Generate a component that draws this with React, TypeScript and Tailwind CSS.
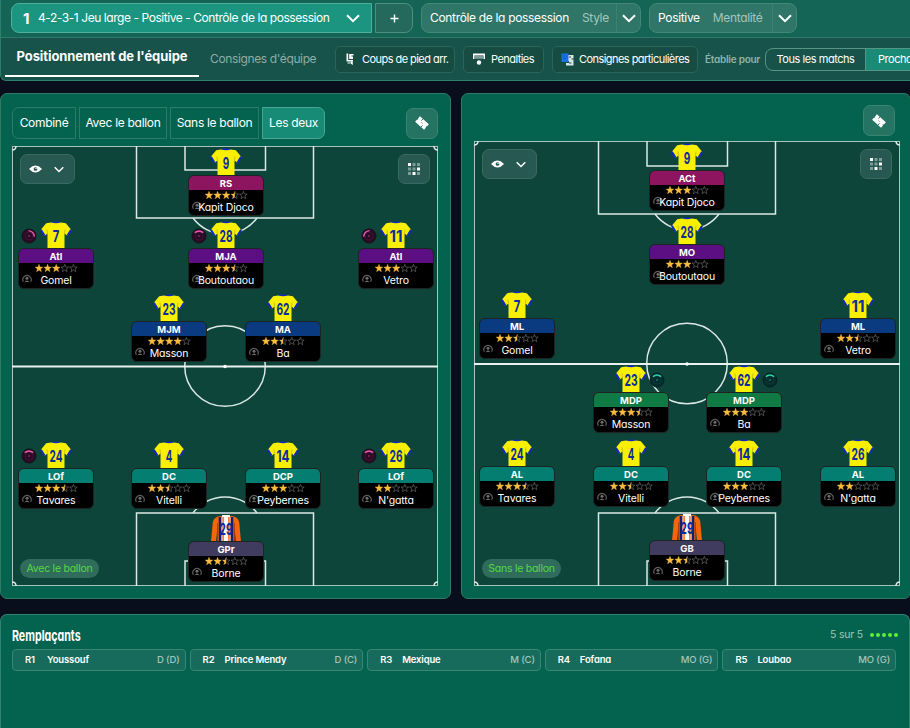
import clsx from "clsx";

type Swirl = "left" | "right" | "top" | "teal";

interface Player {
  x: number;
  y: number;
  num: number;
  role: string;
  color: string;
  stars: number;
  name: string;
  disc?: Swirl;
  keeper?: boolean;
}

const PINK = "bg-[#8d1560] border-[#a53a7e]";
const PURPLE = "bg-[#5c0f83] border-[#7c3a9e]";
const BLUE = "bg-[#0a3a80] border-[#3058a0]";
const TEAL = "bg-[#047e70] border-[#31998c]";
const GREEN = "bg-[#107a45] border-[#3c9869]";
const SLATE = "bg-[#403c5f] border-[#5d5a79]";

// x / y : centre and top edge of each card, relative to the pitch
const withBall: Player[] = [
  { x: 214, y: 29, num: 9, role: "RS", color: PINK, stars: 3.5, name: "Kapit Djoco" },
  { x: 44, y: 102, num: 7, role: "Atl", color: PURPLE, stars: 3, name: "Gomel", disc: "right" },
  { x: 214, y: 102, num: 28, role: "MJA", color: PURPLE, stars: 3.5, name: "Boutoutaou", disc: "top" },
  { x: 384, y: 102, num: 11, role: "Atl", color: PURPLE, stars: 3, name: "Vetro", disc: "left" },
  { x: 157, y: 175, num: 23, role: "MJM", color: BLUE, stars: 4, name: "Masson" },
  { x: 271, y: 175, num: 62, role: "MA", color: BLUE, stars: 2.5, name: "Ba" },
  { x: 44, y: 322, num: 24, role: "LOf", color: TEAL, stars: 3.5, name: "Tavares", disc: "top" },
  { x: 157, y: 322, num: 4, role: "DC", color: TEAL, stars: 2.5, name: "Vitelli" },
  { x: 271, y: 322, num: 14, role: "DCP", color: TEAL, stars: 3, name: "Peybernes" },
  { x: 384, y: 322, num: 26, role: "LOf", color: TEAL, stars: 2, name: "N'gatta", disc: "top" },
  { x: 214, y: 395, num: 29, role: "GPr", color: SLATE, stars: 2.5, name: "Borne", keeper: true },
];

const withoutBall: Player[] = [
  { x: 213, y: 29, num: 9, role: "ACt", color: PINK, stars: 3, name: "Kapit Djoco" },
  { x: 213, y: 103, num: 28, role: "MO", color: PURPLE, stars: 3, name: "Boutoutaou" },
  { x: 43, y: 177, num: 7, role: "ML", color: BLUE, stars: 2.5, name: "Gomel" },
  { x: 384, y: 177, num: 11, role: "ML", color: BLUE, stars: 2.5, name: "Vetro" },
  { x: 157, y: 251, num: 23, role: "MDP", color: GREEN, stars: 3.5, name: "Masson", disc: "teal" },
  { x: 270, y: 251, num: 62, role: "MDP", color: GREEN, stars: 3, name: "Ba", disc: "teal" },
  { x: 43, y: 325, num: 24, role: "AL", color: TEAL, stars: 3.5, name: "Tavares" },
  { x: 157, y: 325, num: 4, role: "DC", color: TEAL, stars: 2.5, name: "Vitelli" },
  { x: 270, y: 325, num: 14, role: "DC", color: TEAL, stars: 3, name: "Peybernes" },
  { x: 384, y: 325, num: 26, role: "AL", color: TEAL, stars: 2, name: "N'gatta" },
  { x: 213, y: 399, num: 29, role: "GB", color: SLATE, stars: 2.5, name: "Borne", keeper: true },
];

const subs = [
  { id: "R1", name: "Youssouf", pos: "D (D)" },
  { id: "R2", name: "Prince Mendy", pos: "D (C)" },
  { id: "R3", name: "Mexique", pos: "M (C)" },
  { id: "R4", name: "Fofana", pos: "MO (G)" },
  { id: "R5", name: "Loubao", pos: "MO (G)" },
];

const Chevron = ({ className }: { className?: string }) => (
  <svg viewBox="0 0 14 9" className={clsx("shrink-0", className)} fill="none" stroke="currentColor" strokeWidth="2">
    <path d="M1 1.2 L7 7.2 L13 1.2" />
  </svg>
);

const Shirt = ({ num, keeper }: { num: number; keeper?: boolean }) => (
  <svg viewBox="0 0 32 28" className="block h-7 w-8 shrink-0">
    {keeper ? (
      <>
        <path d="M10 2 Q4 3 2.8 8 L1 28 H6 L7.5 13 V28 H24.5 V13 L26 28 H31 L29.2 8 Q28 3 22 2 Z" fill="#f4650c" />
        <path d="M7.5 9 V28 M24.5 9 V28" stroke="#a53608" strokeWidth="0.8" />
        <path d="M10 3 V28 M22 3 V28" stroke="#14206e" strokeWidth="2.6" />
        <path d="M12 3 V28 M20 3 V28" stroke="#d8dcf0" strokeWidth="1" />
        <rect x="13.8" y="2" width="4.4" height="26" fill="#ffffff" />
        <path d="M12 1 H20 V3 H12Z" fill="#ffffff" />
      </>
    ) : (
      <>
        <path d="M11.5 1 Q16 0 20.5 1 L20.5 3 H11.5 Z" fill="#1128c4" />
        <path
          d="M11 1.6 Q16 2.8 21 1.6 L25.8 2.2 L31.2 8.7 L27.6 15 L24.5 12.6 V28 H7.5 V12.6 L4.4 15 L0.8 8.7 L6.2 2.2 Z"
          fill="#f8f000"
        />
        <path d="M0.9 8.7 L4.6 14.8 M31.1 8.7 L27.4 14.8" stroke="#1128c4" strokeWidth="2" />
        <path d="M7.5 12.5 L7 8.5 M24.5 12.5 L25 8.5" stroke="#b9b200" strokeWidth="0.7" />
      </>
    )}
    <text
      x="16"
      y="20.5"
      textAnchor="middle"
      textLength={num > 9 ? 13 : 6.5}
      lengthAdjust="spacingAndGlyphs"
      fontFamily="Inter, sans-serif"
      fontWeight="700"
      fontSize="16"
      fill="#0d2b9c"
    >
      {num}
    </text>
  </svg>
);

const STAR = "M4 0.3 L5 3 L7.8 3.1 L5.6 4.9 L6.4 7.7 L4 6.1 L1.6 7.7 L2.4 4.9 L0.2 3.1 L3 3 Z";

const Stars = ({ value }: { value: number }) => (
  <svg viewBox="0 0 43 8" className="h-2 w-[43px]">
    {[0, 1, 2, 3, 4].map((i) => (
      <g key={i} transform={`translate(${i * 8.6} 0)`}>
        {value >= i + 1 ? (
          <path d={STAR} fill="#fbbd3e" stroke="#fbbd3e" strokeWidth="0.4" />
        ) : (
          <>
            <path d={STAR} fill="none" stroke="#747474" strokeWidth="0.6" />
            {value > i && <path d="M4 0.3 V6.1 L1.6 7.7 L2.4 4.9 L0.2 3.1 L3 3 Z" fill="#fbbd3e" />}
          </>
        )}
      </g>
    ))}
  </svg>
);

const Disc = ({ kind }: { kind: Swirl }) => {
  const teal = kind === "teal";
  const turn = kind === "left" ? -45 : kind === "right" ? 45 : 0;
  return (
    <svg viewBox="0 0 16 16" className="h-4 w-4">
      <circle cx="8" cy="8" r="7" fill={teal ? "#062d2d" : "#2b0c25"} stroke={teal ? "#052020" : "#16101a"} />
      <circle cx="8" cy="8" r="4" fill="none" stroke={teal ? "#0a3836" : "#3d1233"} strokeWidth="1" />
      <circle cx="8" cy="8" r="0.7" fill={teal ? "#24b99b" : "#d6459b"} />
      <path
        d="M3.8 4.6 Q8 1.2 12.2 4.6"
        transform={`rotate(${turn} 8 8)`}
        fill="none"
        stroke={teal ? "#22d3ac" : "#ee59b2"}
        strokeWidth="1.5"
      />
    </svg>
  );
};

const PlayerCard = ({ p }: { p: Player }) => (
  <div className="absolute w-[76px] -translate-x-1/2" style={{ left: p.x, top: p.y - 27 }}>
    <div className="flex h-[27px] justify-center overflow-hidden pr-px">
      <Shirt num={p.num} keeper={p.keeper} />
    </div>
    {p.disc && (
      <div className={clsx("absolute top-[7px]", p.disc === "teal" ? "left-[56px]" : "left-[3px]")}>
        <Disc kind={p.disc} />
      </div>
    )}
    <div className="relative h-[41px] overflow-hidden rounded-[6px] border border-[#1d2423] bg-black text-white">
      <div
        className={clsx(
          "-mx-px -mt-px flex h-[15px] items-center justify-center rounded-t-[6px] border border-b-0 pt-px text-[9.5px] font-bold leading-none",
          p.color
        )}
      >
        {p.role}
      </div>
      <div className="flex h-[10px] items-center justify-center">
        <Stars value={p.stars} />
      </div>
      <svg viewBox="0 0 10 10" className="absolute left-[3px] top-[25px] h-[10px] w-[10px]" fill="#6e6e6e">
        <path d="M1.4 7.8 A4.2 4.2 0 1 1 8.6 7.8" fill="none" stroke="#5c5c5c" strokeWidth="1.2" />
        <circle cx="5" cy="4.2" r="1.5" />
        <path d="M2.4 8.6 Q5 4.6 7.6 8.6 L6.2 8 H3.8 Z" />
      </svg>
      <p className="relative whitespace-nowrap pt-px text-center text-[10.5px] leading-[13px] tracking-[-0.15px]">{p.name}</p>
    </div>
  </div>
);

const PitchLines = ({ h, top, bottom }: { h: number; top: number; bottom: number }) => {
  const mid = h / 2 + 0.5;
  return (
    <svg width="426" height={h} viewBox={`0 0 426 ${h}`} className="block" fill="none" stroke="#dbe8e5" strokeWidth="1.5">
      <rect x="0.5" y="0.5" width="425" height={h - 1} strokeWidth="1" stroke="#a9c3bd" />
      <path d={`M124.500 0 V${top} H301.500 V0`} />
      <path d={`M173 0 V${top - 48} H253.500 V0`} />
      <path d={`M124.500 ${h} V${bottom} H301.500 V${h}`} />
      <path d={`M173 ${h} V${bottom + 48} H253.500 V${h}`} />
      <path d={`M181 ${top} A40 40 0 0 0 245 ${top}`} />
      <path d={`M181 ${bottom} A40 40 0 0 1 245 ${bottom}`} />
      <circle cx="213" cy={mid - 0.5} r="40.3" />
      <path d={`M0 ${mid} H426`} strokeWidth="2" stroke="#e9f2f0" />
      <circle cx="213" cy={mid} r="1.8" fill="#fff" stroke="none" />
      <path d={`M0 4 Q4 4 4 0 M422 0 Q422 4 426 4 M0 ${h - 4} Q4 ${h - 4} 4 ${h} M422 ${h} Q422 ${h - 4} 426 ${h - 4}`} />
    </svg>
  );
};

interface PitchProps {
  h: number;
  top: number;
  bottom: number;
  players: Player[];
  label: string;
}

const Pitch = ({ h, top, bottom, players, label }: PitchProps) => (
  <div className="relative w-[426px] bg-[#0d453b]">
    <PitchLines h={h} top={top} bottom={bottom} />
    <button className="absolute left-[8px] top-[8px] flex h-[30px] w-[55px] items-center justify-center gap-3 rounded-[7px] border border-[#3c6862] bg-[#275852] pr-[3px] text-white">
      <svg viewBox="0 0 14 8" className="h-2 w-[13px]">
        <path d="M0 4 Q7 -3.5 14 4 Q7 11.5 0 4 Z" fill="#fff" />
        <circle cx="7" cy="4" r="2" fill="#275852" />
        <circle cx="7.6" cy="3.4" r="0.7" fill="#fff" />
      </svg>
      <Chevron className="h-[7px] w-[10px]" />
    </button>
    <button className="absolute right-[8px] top-[8px] flex h-[30px] w-8 items-center justify-center rounded-[7px] border border-[#3c6862] bg-[#275852]">
      <svg viewBox="0 0 12 12" className="h-3 w-3">
        {[0, 1, 2].map((r) =>
          [0, 1, 2].map((c) => (
            <rect
              key={`${r}${c}`}
              x={c * 4.5}
              y={r * 4.5}
              width="3"
              height="3"
              fill={(r === 0 && c === 0) || (r === 1 && c === 2) || (r === 2 && c === 1) ? "#fff" : "#7d9c98"}
            />
          ))
        )}
      </svg>
    </button>
    {players.map((p) => (
      <PlayerCard key={p.num} p={p} />
    ))}
    <span className="absolute bottom-[8px] left-[8px] flex h-[19px] w-[79px] items-center justify-center whitespace-nowrap rounded-full bg-[#2f6c5b] text-[10.5px] tracking-[-0.25px] text-[#55d847]">
      {label}
    </span>
  </div>
);

const TicketButton = () => (
  <button className="flex h-[31px] w-8 items-center justify-center rounded-[7px] border border-[#3a8371] bg-[#257363]">
    <svg viewBox="0 0 14 14" className="h-[14px] w-[14px]">
      <g transform="rotate(42 7 7)">
        <path d="M1 3.4 H13 V6 L12.2 7 L13 8 V10.6 H1 V8 L1.8 7 L1 6 Z" fill="#fff" />
        <path d="M5 3.4 V5.6 M9 8.4 V10.6 M6.4 7 H7.6" stroke="#257363" strokeWidth="0.9" />
      </g>
    </svg>
  </button>
);

const SetPieceIcon = () => (
  <svg viewBox="0 0 8 12" className="h-3 w-2 shrink-0" fill="#fff">
    <path d="M0.5 0.5 H2.2 V7 H7 V8.5 H0.5 Z M3.2 1 H7.5 V2.5 H5.5 V3.5 H7 V6 H3.2 Z" />
    <path d="M1.5 9.5 H4 V10.5 H1.5 Z M4.5 8.5 H6.8 V12 L4.5 10.5 Z" />
  </svg>
);

const PenaltyIcon = () => (
  <svg viewBox="0 0 12 12" className="h-3 w-3 shrink-0">
    <path d="M0 0.5 H12 V6 H10.5 V2.5 H1.5 V6 H0 Z" fill="#fff" />
    <path d="M2 2.5 H10 V5.8 H2 Z" fill="#7d9e98" />
    <circle cx="6" cy="9.5" r="2.2" fill="#fff" />
  </svg>
);

const InstructionsIcon = () => (
  <svg viewBox="0 0 13 13" className="h-[13px] w-[13px] shrink-0">
    <path d="M7 2 H12.5 V5.5 H10.5 V6.5 H12.5 V12.5 H5 V10 H8 V8 H7 Z" fill="#d9e6e3" />
    <path d="M8 4 H10 M8 10 H10.5" stroke="#16554a" />
    <path d="M0.5 0.5 H7.5 V9 H0.5 Z" fill="#1673ea" />
    <path d="M2 3 H3.5 M5 3 H6 M2.5 5.5 H5" stroke="#0a50b5" />
  </svg>
);

const Dropdown = ({ value, label, className }: { value: string; label: string; className: string }) => (
  <div
    className={clsx(
      "flex h-[30px] items-center whitespace-nowrap rounded-[8px] border border-[#438777] bg-[#2f7668] pl-2 text-[12px] tracking-[-0.33px]",
      className
    )}
  >
    <span className="text-white">{value}</span>
    <span className="ml-[13px] text-[#a5c5bd]">{label}</span>
    <span className="ml-auto flex h-full w-6 items-center justify-center border-l border-[#3b8070] text-white">
      <Chevron className="h-[9px] w-[14px]" />
    </span>
  </div>
);

const toolButton =
  "flex h-[27px] shrink-0 items-center rounded-[5px] border border-[#2a655a] bg-[#164c42] text-[11px] tracking-[-0.55px]";

const Header = () => (
  <header className="h-[81px] overflow-hidden rounded-bl-[6px] border-b border-l border-[#2c7d69] bg-[#17534a]">
    <div className="flex h-[38px] items-start border-b border-[#2f7a69] bg-[#156556] pl-[10px] pt-[3px]">
      <button className="flex h-[30px] w-[361px] items-center rounded-l-[8px] border border-[#4fae9c] bg-[#1b9580] pl-[11px] text-white">
        <span className="w-[15px] shrink-0 text-left text-[15px] font-bold leading-none">1</span>
        <span className="whitespace-nowrap text-[12px] tracking-[-0.44px]">
          4-2-3-1 Jeu large - Positive - Contrôle de la possession
        </span>
        <Chevron className="ml-auto mr-[11px] h-[9px] w-[14px]" />
      </button>
      <button className="ml-[3px] flex h-[30px] w-[38px] items-center justify-center rounded-r-[8px] border border-[#4f8f81] bg-[#24695c]">
        <svg viewBox="0 0 10 10" className="h-[9px] w-[9px]">
          <path d="M5 0.5 V9.5 M0.5 5 H9.5" stroke="#fff" strokeWidth="1.6" />
        </svg>
      </button>
      <Dropdown value="Contrôle de la possession" label="Style" className="ml-2 w-[220px]" />
      <Dropdown value="Positive" label="Mentalité" className="ml-2 w-[148px]" />
    </div>
    <nav className="flex h-[42px] items-center whitespace-nowrap pl-1 text-white">
      <div className="flex h-[39px] w-[194px] shrink-0 items-center justify-center self-start border-b-2 border-white text-[13px] font-bold tracking-[-0.08px]">
        Positionnement de l'équipe
      </div>
      <div className="ml-[11px] w-[125px] shrink-0 text-[12px] tracking-[-0.37px] text-[#8fada7]">Consignes d'équipe</div>
      <button className={clsx(toolButton, "w-[120px] gap-2 pl-[10px]")}>
        <SetPieceIcon />
        Coups de pied arr.
      </button>
      <button className={clsx(toolButton, "ml-2 w-[81px] gap-[6px] pl-[9px]")}>
        <PenaltyIcon />
        Penalties
      </button>
      <button className={clsx(toolButton, "ml-2 w-[146px] gap-[5px] pl-[8px]")}>
        <InstructionsIcon />
        Consignes particulières
      </button>
      <span className="ml-[7px] w-[60px] shrink-0 text-[10px] font-semibold tracking-[-0.25px] text-[#8fb3ab]">Établie pour</span>
      <div className="flex h-[23px] w-[190px] shrink-0 overflow-hidden rounded-[8px] border border-[#559585] text-[11px] tracking-[-0.45px]">
        <span className="flex w-[100px] items-center justify-center border-r border-[#559585]">Tous les matchs</span>
        <span className="flex flex-1 items-center bg-[#1a8b77] pl-3">Prochain match</span>
      </div>
    </nav>
  </header>
);

const viewTabs = [
  { label: "Combiné", cls: "w-[64px] rounded-l-[7px] border-[#2c7a67]" },
  { label: "Avec le ballon", cls: "w-[88px] border-[#2c7a67]" },
  { label: "Sans le ballon", cls: "w-[89px] border-[#2c7a67]" },
  { label: "Les deux", cls: "w-[63px] rounded-r-[7px] border-[#48a693] bg-[#178b75]" },
];

const App = () => {
  return (
    <div className="h-[728px] w-[910px] overflow-hidden bg-[#080e1b] font-['Inter',sans-serif] [font-feature-settings:'cv11']">
      <Header />
      <main className="mt-[12px] flex gap-[10px]">
        <section className="h-[506px] w-[451px] shrink-0 rounded-[7px] border border-[#2f7a63] bg-[#04634f] pl-[11px] pt-[13px]">
          <div className="mb-[7px] flex h-8 w-[426px] items-center justify-between">
            <div className="flex gap-[3px]">
              {viewTabs.map((t) => (
                <button
                  key={t.label}
                  className={clsx(
                    "flex h-8 items-center justify-center whitespace-nowrap border text-[12px] tracking-[-0.3px] text-white",
                    t.cls
                  )}
                >
                  {t.label}
                </button>
              ))}
            </div>
            <TicketButton />
          </div>
          <Pitch h={440} top={72} bottom={367} players={withBall} label="Avec le ballon" />
        </section>
        <section className="h-[506px] w-[450px] shrink-0 rounded-[7px] border border-[#2f7a63] bg-[#04634f] pl-[12px] pt-[11px]">
          <div className="mb-[5px] flex h-[31px] w-[421px] justify-end">
            <TicketButton />
          </div>
          <Pitch h={445} top={73} bottom={372} players={withoutBall} label="Sans le ballon" />
        </section>
      </main>
      <section className="mt-[15px] h-[120px] rounded-t-[7px] border border-b-0 border-[#2f8471] bg-[#04634f] pl-[11px] pr-[13px] pt-[11px]">
        <div className="flex h-[18px] items-center justify-between">
          <h2 className="origin-left scale-x-[0.71] text-[15px] font-bold leading-none text-white">Remplaçants</h2>
          <div className="-mr-[2px] flex items-center gap-[2px] text-[10.5px] tracking-[-0.2px] text-[#9cc6b9]">
            <span className="mr-[5px]">5 sur 5</span>
            {[1, 2, 3, 4, 5].map((i) => (
              <i key={i} className="h-1 w-1 rounded-full bg-[#5cf034]" />
            ))}
          </div>
        </div>
        <ul className="mt-[5px] grid grid-cols-5 gap-[4px]">
          {subs.map((s) => (
            <li
              key={s.id}
              className="flex h-[22px] items-center rounded-[4px] border border-[#3a8573] bg-[#166b5c] pl-3 pr-[5px] text-[9.5px] font-semibold tracking-[-0.15px] text-white"
            >
              <span className="w-[22px]">{s.id}</span>
              <span>{s.name}</span>
              <span className="ml-auto font-medium text-[#a3c6bd]">{s.pos}</span>
            </li>
          ))}
        </ul>
      </section>
    </div>
  );
};

export default App;
